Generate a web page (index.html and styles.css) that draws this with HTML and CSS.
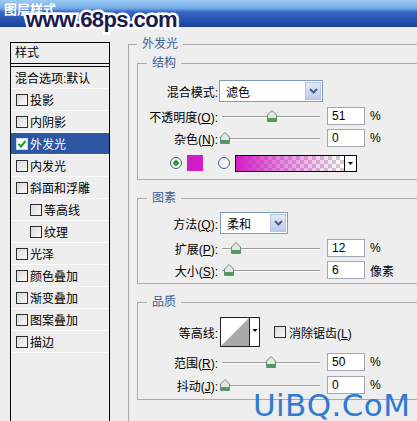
FILE: index.html
```html
<!DOCTYPE html>
<html lang="zh-CN">
<head>
    <meta charset="UTF-8">
    <meta name="viewport" content="width=device-width, initial-scale=1.0">
    <title>图层样式</title>
    <link rel="stylesheet" href="styles.css">
</head>
<body>

    <div class="titlebar">
        <span class="title">图层样式</span>
        <span class="wm-top">www.68ps.com</span>
    </div>

    <div class="dialog">
        <div class="styles-list">
            <div class="list-head">样式</div>
            <div class="list-row blend">混合选项:默认</div>
            <div class="list-row"><span class="cb"></span>投影</div>
            <div class="list-row"><span class="cb"></span>内阴影</div>
            <div class="list-row active">
                <svg class="cb-on" width="12" height="12" viewBox="0 0 12 12"><rect x="0.5" y="0.5" width="11" height="11" fill="#fff" stroke="#c8d4ea"/><path d="M2.5 6 L5 8.5 L9.5 3" stroke="#24a024" stroke-width="2.2" fill="none"/></svg>外发光
            </div>
            <div class="list-row"><span class="cb"></span>内发光</div>
            <div class="list-row"><span class="cb"></span>斜面和浮雕</div>
            <div class="list-row sub"><span class="cb"></span>等高线</div>
            <div class="list-row sub"><span class="cb"></span>纹理</div>
            <div class="list-row"><span class="cb"></span>光泽</div>
            <div class="list-row"><span class="cb"></span>颜色叠加</div>
            <div class="list-row"><span class="cb"></span>渐变叠加</div>
            <div class="list-row"><span class="cb"></span>图案叠加</div>
            <div class="list-row"><span class="cb"></span>描边</div>
        </div>

        <fieldset class="group outer">
            <legend>外发光</legend>

            <fieldset class="group inner">
                <legend>结构</legend>
                <div class="row row-first">
                    <span class="lbl">混合模式:</span>
                    <div class="select mode"><span>滤色</span><span class="drop"><svg width="9" height="6" viewBox="0 0 9 6"><path d="M1 1 L4.5 4.5 L8 1" stroke="#4a5d82" stroke-width="2" fill="none"/></svg></span></div>
                </div>
                <div class="row">
                    <span class="lbl">不透明度(<u>O</u>):</span>
                    <div class="slider"><span class="range"><svg class="thumb" style="left:51%" width="10" height="12" viewBox="0 0 10 12"><path d="M0.5 5 L5 0.5 L9.5 5 V11.5 H0.5 Z" fill="#dfe8e0" stroke="#6f8a78"/><rect x="1" y="8" width="8" height="3" fill="#4f9a5c"/></svg></span></div>
                    <span class="num">51</span><span class="unit">%</span>
                </div>
                <div class="row">
                    <span class="lbl">杂色(<u>N</u>):</span>
                    <div class="slider"><span class="range"><svg class="thumb" style="left:0%" width="10" height="12" viewBox="0 0 10 12"><path d="M0.5 5 L5 0.5 L9.5 5 V11.5 H0.5 Z" fill="#dfe8e0" stroke="#6f8a78"/><rect x="1" y="8" width="8" height="3" fill="#4f9a5c"/></svg></span></div>
                    <span class="num">0</span><span class="unit">%</span>
                </div>
                <div class="row row-color">
                    <span class="radio on"></span>
                    <span class="swatch"></span>
                    <span class="radio second"></span>
                    <div class="gradient">
                        <span class="gradient-fill"></span>
                        <span class="gradient-drop"><svg width="5" height="3" viewBox="0 0 5 3"><path d="M0 0 H5 L2.5 3 Z" fill="#000"/></svg></span>
                    </div>
                </div>
            </fieldset>

            <fieldset class="group inner elements">
                <legend>图素</legend>
                <div class="row row-first">
                    <span class="lbl">方法(<u>Q</u>):</span>
                    <div class="select method"><span>柔和</span><span class="drop"><svg width="9" height="6" viewBox="0 0 9 6"><path d="M1 1 L4.5 4.5 L8 1" stroke="#4a5d82" stroke-width="2" fill="none"/></svg></span></div>
                </div>
                <div class="row">
                    <span class="lbl">扩展(<u>P</u>):</span>
                    <div class="slider"><span class="range"><svg class="thumb" style="left:12%" width="10" height="12" viewBox="0 0 10 12"><path d="M0.5 5 L5 0.5 L9.5 5 V11.5 H0.5 Z" fill="#dfe8e0" stroke="#6f8a78"/><rect x="1" y="8" width="8" height="3" fill="#4f9a5c"/></svg></span></div>
                    <span class="num">12</span><span class="unit">%</span>
                </div>
                <div class="row">
                    <span class="lbl">大小(<u>S</u>):</span>
                    <div class="slider"><span class="range"><svg class="thumb" style="left:4%" width="10" height="12" viewBox="0 0 10 12"><path d="M0.5 5 L5 0.5 L9.5 5 V11.5 H0.5 Z" fill="#dfe8e0" stroke="#6f8a78"/><rect x="1" y="8" width="8" height="3" fill="#4f9a5c"/></svg></span></div>
                    <span class="num">6</span><span class="unit">像素</span>
                </div>
            </fieldset>

            <fieldset class="group inner quality">
                <legend>品质</legend>
                <div class="row row-contour">
                    <span class="lbl">等高线:</span>
                    <svg class="contour" width="40" height="30" viewBox="0 0 40 30">
                        <rect x="0.5" y="0.5" width="39" height="29" fill="#fff" stroke="#222"/>
                        <path d="M1 29 L29 1 V29 Z" fill="#a9a9a9"/>
                        <line x1="29.5" y1="0" x2="29.5" y2="30" stroke="#222"/>
                        <path d="M32.5 12 H37.5 L35 15 Z" fill="#000"/>
                    </svg>
                    <span class="cb aa"></span><span>消除锯齿(<u>L</u>)</span>
                </div>
                <div class="row">
                    <span class="lbl">范围(<u>R</u>):</span>
                    <div class="slider"><span class="range"><svg class="thumb" style="left:50%" width="10" height="12" viewBox="0 0 10 12"><path d="M0.5 5 L5 0.5 L9.5 5 V11.5 H0.5 Z" fill="#dfe8e0" stroke="#6f8a78"/><rect x="1" y="8" width="8" height="3" fill="#4f9a5c"/></svg></span></div>
                    <span class="num">50</span><span class="unit">%</span>
                </div>
                <div class="row row-last">
                    <span class="lbl">抖动(<u>J</u>):</span>
                    <div class="slider"><span class="range"><svg class="thumb" style="left:0%" width="10" height="12" viewBox="0 0 10 12"><path d="M0.5 5 L5 0.5 L9.5 5 V11.5 H0.5 Z" fill="#dfe8e0" stroke="#6f8a78"/><rect x="1" y="8" width="8" height="3" fill="#4f9a5c"/></svg></span></div>
                    <span class="num">0</span><span class="unit">%</span>
                </div>
            </fieldset>
        </fieldset>
    </div>

    <span class="wm-bottom">UiBQ.CoM</span>

</body>
</html>
```

FILE: styles.css
```css
body {
    margin: 0;
    width: 417px;
    height: 421px;
    overflow: hidden;
    position: relative;
    background: #eeeeee;
    color: #000;
    font-family: "Liberation Sans", "Noto Sans CJK SC", sans-serif;
    font-size: 12px;
}
.titlebar {
    height: 27px;
    position: relative;
    background: linear-gradient(#9ccaf4 0, #76ade8 8px, #3766c2 12px, #2653b0 20px, #1b4195 27px);
}
.title {
    display: block;
    padding: 2px 0 0 4px;
    color: #fff;
    font-weight: bold;
    font-size: 13px;
    line-height: 15px;
}
.wm-top {
    position: absolute;
    left: 26px;
    top: 7px;
    font-family: "Liberation Sans", sans-serif;
    font-weight: bold;
    font-size: 22px;
    line-height: 26px;
    letter-spacing: -0.6px;
    color: #1b1b4e;
    -webkit-text-stroke: 5px #fff;
    paint-order: stroke fill;
}
.wm-bottom {
    position: absolute;
    left: 253px;
    top: 394px;
    font-family: "DejaVu Sans", sans-serif;
    font-size: 31px;
    line-height: 22px;
    letter-spacing: 0.4px;
    color: #2f7bd2;
}
.dialog {
    display: flex;
    align-items: flex-start;
    height: 394px;
    overflow: hidden;
}

/* left list */
.styles-list {
    flex: none;
    width: 100px;
    height: 400px;
    margin: 15px 0 0 10px;
    box-sizing: border-box;
    border: 1px solid #000;
    border-bottom: none;
}
.list-head {
    height: 20px;
    line-height: 20px;
    padding-left: 4px;
    border-bottom: 1px solid #000;
}
.list-row {
    display: flex;
    align-items: center;
    height: 22px;
    box-sizing: border-box;
    padding-left: 5px;
    border-bottom: 1px solid #fbfbfb;
}
.list-row.blend {
    height: 23px;
    margin-top: 2px;
    padding-left: 4px;
    border-top: 1px solid #000;
}
.list-row.sub {
    padding-left: 19px;
}
.list-row.active {
    background: #2d56a3;
    color: #fff;
}
.cb {
    flex: none;
    width: 12px;
    height: 12px;
    box-sizing: border-box;
    border: 1px solid #2e2e2e;
    background: linear-gradient(135deg, #d8d8d8, #fafafa);
    margin-right: 2px;
}
.cb-on {
    flex: none;
    margin-right: 2px;
}

/* group boxes */
.group {
    margin: 0;
    box-sizing: border-box;
    border: 1px solid #a9a9a9;
    min-width: 0;
}
.group legend {
    padding: 0 5px;
    color: #3d5e96;
    font-size: 12px;
    line-height: 14px;
}
.outer {
    flex: none;
    width: 300px;
    margin: 10px 0 0 18px;
    padding: 5px 0 40px 8px;
}
.inner {
    width: 290px;
    padding: 0 0 6px 9px;
}
.elements {
    margin-top: 11px;
    padding-bottom: 2px;
}
.quality {
    margin-top: 11px;
    padding-bottom: 3px;
}

/* rows */
.row {
    display: flex;
    align-items: center;
    height: 22px;
    white-space: nowrap;
}
.row-first {
    margin: 10px 0 3px;
}
.elements .row-first {
    margin: 7px 0 3px;
}
.row-color {
    height: 20px;
    margin-top: 4px;
}
.row-contour {
    height: 32px;
    margin: 7px 0 3px;
}
.row-last {
    margin-top: 1px;
}
.lbl {
    flex: none;
    width: 71px;
    text-align: right;
}
.select {
    flex: none;
    display: flex;
    align-items: center;
    height: 22px;
    margin-left: 1px;
    box-sizing: border-box;
    border: 1px solid #7f9db9;
    background: #fff;
}
.select span:first-child {
    flex: 1;
    padding-left: 6px;
}
.select.mode {
    width: 104px;
}
.select.method {
    width: 68px;
    margin-left: 2px;
}
.drop {
    flex: none;
    display: flex;
    align-items: center;
    justify-content: center;
    width: 16px;
    height: 18px;
    margin-right: 1px;
    box-sizing: border-box;
    border: 1px solid #b8c6e4;
    background: linear-gradient(#e2e9f8, #bccbea);
}
.slider {
    flex: none;
    position: relative;
    width: 98px;
    height: 22px;
    margin-left: 4px;
}
.slider::before {
    content: "";
    position: absolute;
    left: 0;
    right: 0;
    top: 11px;
    border-top: 1px solid #9d9d9d;
    border-bottom: 1px solid #fafafa;
}
.range {
    position: absolute;
    left: 3px;
    right: 3px;
    top: 5px;
    height: 12px;
}
.thumb {
    position: absolute;
    top: 0;
    transform: translateX(-50%);
}
.num {
    flex: none;
    width: 38px;
    height: 18px;
    line-height: 17px;
    margin-left: 7px;
    padding-left: 4px;
    box-sizing: border-box;
    border: 1px solid #a2a8b0;
    background: #fff;
}
.unit {
    margin-left: 5px;
}
.radio {
    flex: none;
    width: 12px;
    height: 12px;
    box-sizing: border-box;
    border: 1px solid #4d6384;
    border-radius: 50%;
    background: radial-gradient(circle at 60% 60%, #fff, #dde2e8);
}
.radio.on {
    margin-left: 23px;
    background: radial-gradient(circle, #2b9a3a 0 2.5px, #f6f6f6 3px);
}
.radio.second {
    margin-left: 15px;
}
.swatch {
    flex: none;
    width: 16px;
    height: 16px;
    margin-left: 5px;
    background: #d21cc6;
}
.gradient {
    flex: none;
    display: flex;
    width: 122px;
    height: 17px;
    margin-left: 5px;
    box-sizing: border-box;
    border: 1px solid #000;
}
.gradient-fill {
    flex: 1;
    background:
        linear-gradient(to right, #d21cc6, rgba(210, 28, 198, 0.55) 40%, rgba(210, 28, 198, 0)),
        repeating-conic-gradient(#cfcfcf 0 25%, #fff 0 50%) 0 0 / 8px 8px;
}
.gradient-drop {
    flex: none;
    display: flex;
    align-items: center;
    justify-content: center;
    width: 11px;
    border-left: 1px solid #000;
    background: #fff;
}
.contour {
    flex: none;
    margin-left: 2px;
}
.cb.aa {
    margin-left: 14px;
    margin-right: 3px;
}
```
